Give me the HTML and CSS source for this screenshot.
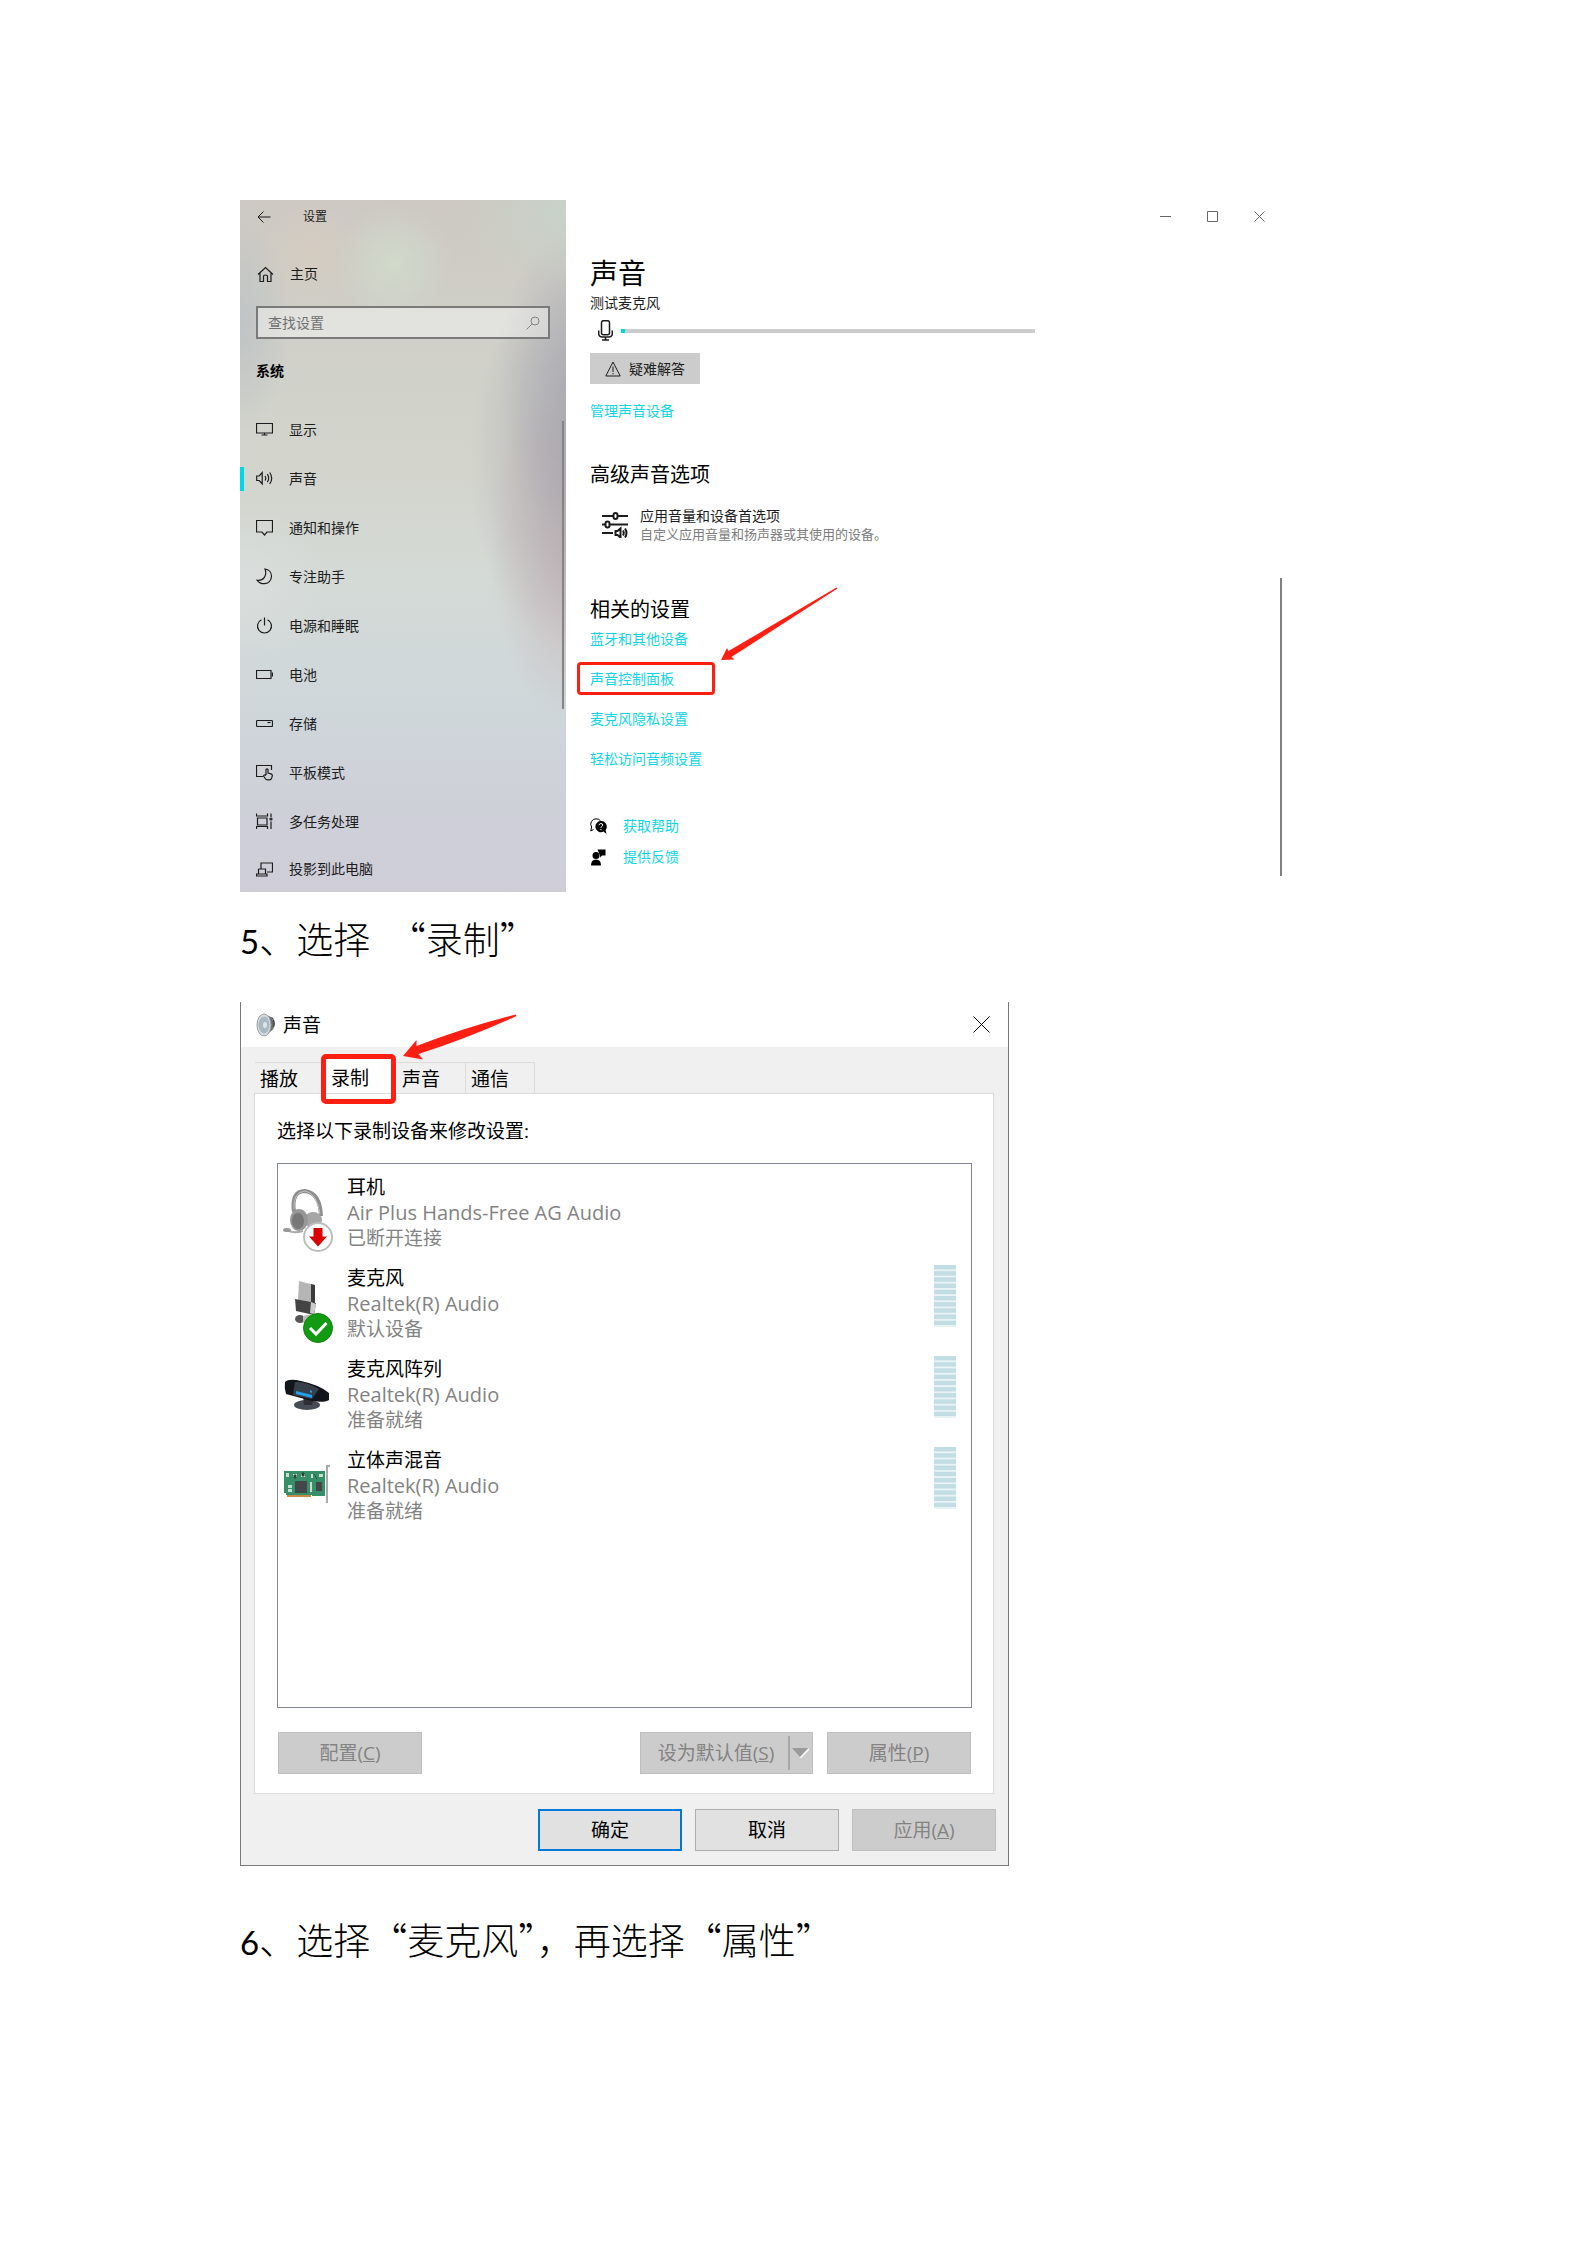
FILE: index.html
```
<!DOCTYPE html>
<html lang="zh-CN">
<head>
    <meta charset="UTF-8">
    <meta name="viewport" content="width=device-width, initial-scale=1.0">
    <title>麦克风设置说明</title>
    <link rel="stylesheet" href="styles.css">
</head>
<body>
    <div class="page">
        <section class="settings">
            <aside class="sidebar">
                <div class="sidebar-title">
                    <button class="icon-btn" aria-label="返回">
                        <svg width="14" height="12" viewBox="0 0 14 12"><path d="M13.500 6H1M6.500 .5L1 6l5.500 5.500"/></svg>
                    </button>
                    <span>设置</span>
                </div>
                <a class="home" href="#">
                    <svg width="17" height="17" viewBox="0 0 17 17"><path d="M1 8.500L8.500 1.500 16 8.500M3 7v8.500h3.500V10q0-1 2-1t2 1v5.500H14V7"/></svg>
                    <span>主页</span>
                </a>
                <div class="search">
                    <input type="text" placeholder="查找设置" aria-label="查找设置">
                    <svg width="14" height="14" viewBox="0 0 14 14"><circle cx="9" cy="5" r="4"/><path d="M6 8L.5 13.500"/></svg>
                </div>
                <h2 class="group">系统</h2>
                <nav class="nav">
                    <a href="#">
                        <svg width="17" height="17" viewBox="0 0 17 17"><path d="M.5 2.500h16v9.500H.5zM8.500 12V14M5.500 14h6"/></svg>
                        <span>显示</span>
                    </a>
                    <a class="active" href="#">
                        <svg width="17" height="17" viewBox="0 0 17 17"><path d="M.7 6v4.500h2.500l3 3.500V2.500l-3 3.500zM9 6q1.500 2.200 0 4.500M11.300 4.200q2.800 4 0 8M13.700 2.500q4 5.700 0 11.500"/></svg>
                        <span>声音</span>
                    </a>
                    <a href="#">
                        <svg width="17" height="17" viewBox="0 0 17 17"><path d="M.5 1.500h16v11.500h-5.500l-2.500 3-2.500-3H.5z"/></svg>
                        <span>通知和操作</span>
                    </a>
                    <a href="#">
                        <svg width="17" height="17" viewBox="0 0 17 17"><path d="M9 1c4 .5 6.500 3.500 6.500 7.200 0 4.300-3.200 7.500-7.300 7.500-3 0-5.500-1.300-7-3.400 6.300.9 10.200-5 7.800-11.300z"/></svg>
                        <span>专注助手</span>
                    </a>
                    <a href="#">
                        <svg width="17" height="17" viewBox="0 0 17 17"><path d="M8.500 .5v8M5.500 2.700a7 7 0 1 0 6 0"/></svg>
                        <span>电源和睡眠</span>
                    </a>
                    <a href="#">
                        <svg width="17" height="17" viewBox="0 0 17 17"><path d="M.5 4.500h14.500v8H.5zM16.500 6.500v4"/></svg>
                        <span>电池</span>
                    </a>
                    <a href="#">
                        <svg width="17" height="17" viewBox="0 0 17 17"><rect x=".5" y="5.500" width="16" height="6" rx="1"/><path d="M11.500 7.500h3"/></svg>
                        <span>存储</span>
                    </a>
                    <a href="#">
                        <svg width="17" height="17" viewBox="0 0 17 17"><path d="M7 12.500H.5v-11h15V6M10 11V5.500q1-1.200 2 0V9l3 .8q1.500.4 1.300 2l-.6 2.200q-.6 1.800-2.200 1.800h-2q-1.500 0-2.300-1.300L7.500 12q.5-1.800 2.500-.5"/></svg>
                        <span>平板模式</span>
                    </a>
                    <a href="#">
                        <svg width="17" height="17" viewBox="0 0 17 17"><path d="M.5 .5v2.500h11V.5M1.500 5h9.500v7H1.500zM.5 16v-2.500h11V16M15 .5V4M15 8.500V16"/><circle cx="15" cy="6" r="1"/></svg>
                        <span>多任务处理</span>
                    </a>
                    <a href="#">
                        <svg width="17" height="17" viewBox="0 0 17 17"><path d="M5 8V2h11.500v9H11M2.500 8H9.500v5M2.500 8v5M.5 13h10.500v2H.5z"/></svg>
                        <span>投影到此电脑</span>
                    </a>
                </nav>
                <div class="sidebar-scroll"></div>
            </aside>
            <main class="content">
                <div class="window-controls">
                    <button class="icon-btn" aria-label="最小化"><svg width="11" height="11" viewBox="0 0 11 11"><path d="M0 5.500h11"/></svg></button>
                    <button class="icon-btn" aria-label="最大化"><svg width="11" height="11" viewBox="0 0 11 11"><path d="M.5 .5h10v10H.5z"/></svg></button>
                    <button class="icon-btn" aria-label="关闭"><svg width="11" height="11" viewBox="0 0 11 11"><path d="M.5 .5l10 10M10.500 .5l-10 10"/></svg></button>
                </div>
                <h1>声音</h1>
                <p class="caption">测试麦克风</p>
                <div class="mic-test">
                    <svg width="15" height="21" viewBox="0 0 15 21"><rect x="3.500" y=".7" width="8" height="14" rx="2"/><path d="M.7 10.500v3q0 3.500 3.500 3.500h6.600q3.500 0 3.500-3.500v-3M7.500 17v3M4 20h7"/></svg>
                    <div class="level"></div>
                </div>
                <button class="troubleshoot">
                    <svg width="16" height="16" viewBox="0 0 16 16"><path d="M8 1L15.200 15H.8zM8 5.500v5.500M8 12v1.300"/></svg>
                    疑难解答
                </button>
                <a class="link manage" href="#">管理声音设备</a>

                <h2>高级声音选项</h2>
                <a class="option" href="#">
                    <svg width="26" height="26" viewBox="0 0 26 26"><path d="M0 4h11.500M15.500 4H26M0 12.500h3.500M7.500 12.500H26M0 21h11"/><rect x="11.500" y="1" width="4" height="6" rx="2"/><rect x="3.500" y="9.500" width="4" height="6" rx="2"/><path d="M13.500 19v4h2l3 2.500v-9l-3 2.500zM21 18.500q1.500 2.500 0 5M23 16.500q3 4.500 0 9"/></svg>
                    <span class="option-text">
                        <span>应用音量和设备首选项</span>
                        <small>自定义应用音量和扬声器或其使用的设备。</small>
                    </span>
                </a>

                <h2 class="related-title">相关的设置</h2>
                <div class="related">
                    <a class="link" href="#">蓝牙和其他设备</a>
                    <a class="link marked" href="#">声音控制面板
                        <svg class="arrow" width="117" height="74" viewBox="0 0 117 74"><path d="M0 73L6 61l1.500 3L115.500 .5l1 1L10.500 70l3 2.500z"/></svg>
                    </a>
                    <a class="link" href="#">麦克风隐私设置</a>
                    <a class="link" href="#">轻松访问音频设置</a>
                </div>
                <div class="help">
                    <svg width="17" height="17" viewBox="0 0 17 17"><path class="line" d="M3.500 11.500L.8 13l.8-4A5.300 5.300 0 0 1 6 .8q3 0 4.500 2"/><path d="M10.800 3a5.600 5.600 0 1 0 2.700 10.600L16.500 16l-.9-4A5.600 5.600 0 0 0 10.800 3z"/><path class="mark" d="M9 7.200q.2-1.700 1.900-1.700 1.800 0 1.800 1.500 0 1-1 1.500-.8.500-.8 1.400M10.900 11v1.200"/></svg>
                    <a class="link" href="#">获取帮助</a>
                    <svg width="17" height="17" viewBox="0 0 17 17"><circle cx="6" cy="6.500" r="3.500"/><path d="M1 16.500q0-6 5-6t5 6zM7.500 .5H15.500V6.500H12l-2 2V6.500z"/></svg>
                    <a class="link" href="#">提供反馈</a>
                </div>
                <div class="content-scroll"></div>
            </main>
        </section>

        <p class="step"><span class="num">5</span>、选择&ensp;“录制”</p>

        <section class="dialog">
            <header class="dialog-title">
                <svg width="20" height="24" viewBox="0 0 20 24">
                    <path d="M8 1l9 4q4 6 0 11l-8 7z" fill="#4b4d4f"/>
                    <path d="M11 3l6 4M12 20l5-4M16 7v9" stroke="#8b8d8f" fill="none"/>
                    <ellipse cx="8" cy="12" rx="7" ry="11" fill="#d9dcde" stroke="#9a9c9e"/>
                    <ellipse cx="8" cy="12" rx="5.500" ry="8.500" fill="#a9b9c3"/>
                    <ellipse cx="9" cy="12" rx="2" ry="3" fill="#dce5ea"/>
                </svg>
                <span>声音</span>
                <button class="icon-btn close" aria-label="关闭"><svg width="17" height="17" viewBox="0 0 17 17"><path d="M.5 .5l16 16M16.500 .5l-16 16"/></svg></button>
            </header>
            <div class="tabs" role="tablist">
                <button role="tab">播放</button>
                <button role="tab" class="selected" aria-selected="true">录制</button>
                <button role="tab">声音</button>
                <button role="tab">通信</button>
                <svg class="arrow" width="114" height="46" viewBox="0 0 114 46"><path d="M0 42L13.500 26v6Q60 14 112.500 .5l1 1.500Q65 24 15.500 40l4.500 5.500z"/></svg>
            </div>
            <div class="panel">
                <p>选择以下录制设备来修改设置:</p>
                <ul class="devices">
                    <li>
                        <svg class="device-icon" width="50" height="78" viewBox="0 0 50 78">
                            <path d="M11 38Q8 17 22 17Q37 19 38 42" fill="none" stroke="#8d8d8d" stroke-width="4"/>
                            <path d="M11 35Q10 18 22 17Q34 19 37 40" fill="none" stroke="#c2c2c2" stroke-width="1"/>
                            <ellipse cx="30" cy="46" rx="9" ry="8" fill="#a6a6a6"/>
                            <ellipse cx="16" cy="46" rx="9" ry="11" fill="#979797"/>
                            <ellipse cx="15" cy="47" rx="6" ry="8" fill="#777"/>
                            <path d="M3 56Q10 60 20 57" fill="none" stroke="#aaa" stroke-width="2"/>
                            <ellipse cx="4" cy="56" rx="4" ry="2" fill="#999"/>
                            <circle cx="35" cy="63" r="14" fill="#fff" stroke="#bdbdbd" stroke-width="2"/>
                            <path d="M30.500 54h9v8.500H44L35 72.500 26 62.500h4.500z" fill="#d90505"/>
                        </svg>
                        <div class="device-text">
                            <span class="name">耳机</span>
                            <span class="model">Air Plus Hands-Free AG Audio</span>
                            <span>已断开连接</span>
                        </div>
                    </li>
                    <li>
                        <svg class="device-icon" width="50" height="78" viewBox="0 0 50 78">
                            <path d="M16 16l15 4v20l-16-4z" fill="#b5b5b5"/>
                            <path d="M28 19l4 1v20l-4-1z" fill="#3c3c3c"/>
                            <path d="M12 34l16 3 5 1-2 12-18-4z" fill="#444"/>
                            <path d="M28 37l5 2-2 10-4-1z" fill="#ccc"/>
                            <ellipse cx="17" cy="54" rx="5" ry="4" fill="#555"/>
                            <path d="M20 51l9-2-2 7-7 2z" fill="#bbb"/>
                            <circle cx="35" cy="63" r="14.500" fill="#129a12" stroke="#0b860b"/>
                            <path d="M27 63l6 6L43.500 58" fill="none" stroke="#fff" stroke-width="3"/>
                        </svg>
                        <div class="device-text">
                            <span class="name">麦克风</span>
                            <span class="model">Realtek(R) Audio</span>
                            <span>默认设备</span>
                        </div>
                        <div class="meter"></div>
                    </li>
                    <li>
                        <svg class="device-icon" width="50" height="78" viewBox="0 0 50 78">
                            <ellipse cx="24" cy="49" rx="13" ry="5" fill="#454c54"/>
                            <path d="M20 39l11 2-2 8h-8z" fill="#2b3036"/>
                            <path d="M2 26Q6 22 18 25Q37 29 46 37V44Q42 47 29 45L3 38Q1 32 2 26z" fill="#12161b"/>
                            <path d="M12 26Q22 25 36 33L29 43 10 39z" fill="#37404a"/>
                            <path d="M13 35l16 4v3l-16-4zM27 34l2 1v2l-2-1z" fill="#22a0ee"/>
                        </svg>
                        <div class="device-text">
                            <span class="name">麦克风阵列</span>
                            <span class="model">Realtek(R) Audio</span>
                            <span>准备就绪</span>
                        </div>
                        <div class="meter"></div>
                    </li>
                    <li>
                        <svg class="device-icon" width="50" height="78" viewBox="0 0 50 78">
                            <path d="M47 19h-3v37" fill="none" stroke="#a9a9a9" stroke-width="2"/>
                            <path d="M1 24h41v25H29v-1H3v-2H1z" fill="#35906a"/>
                            <path d="M4 48h24v2H4z" fill="#c98a3d"/>
                            <path d="M12 34h12v12H12zM33 35h6v9h-6z" fill="#44474a"/>
                            <path d="M3 26h3v4H3zM10 27h4v3h-4zM18 27h4v3h-4zM5 38h4v3H5zM5 42h4v3H5zM27 35h2v10h-2zM28 27h2v4h-2zM36 27h4v3h-4z" fill="#c7ddd0"/>
                            <path d="M11 28h2v3h-2zM19 26h2v3h-2zM31 27l3 5" fill="#333" stroke="#2a4f3d"/>
                        </svg>
                        <div class="device-text">
                            <span class="name">立体声混音</span>
                            <span class="model">Realtek(R) Audio</span>
                            <span>准备就绪</span>
                        </div>
                        <div class="meter"></div>
                    </li>
                </ul>
                <div class="panel-buttons">
                    <button class="btn" disabled>配置(<u>C</u>)</button>
                    <button class="btn split" disabled>
                        <span>设为默认值(<u>S</u>)</span>
                        <svg width="17" height="10" viewBox="0 0 17 10"><path d="M8 10L17 1" stroke="#fff" stroke-width="1.500"/><path d="M0 0h16L8 9z" fill="#9b9b9b"/></svg>
                    </button>
                    <button class="btn" disabled>属性(<u>P</u>)</button>
                </div>
            </div>
            <footer class="dialog-buttons">
                <button class="btn default">确定</button>
                <button class="btn">取消</button>
                <button class="btn" disabled>应用(<u>A</u>)</button>
            </footer>
        </section>

        <p class="step"><span class="num">6</span>、选择“麦克风”，再选择“属性”</p>
    </div>
</body>
</html>
```

FILE: styles.css
```
*,
*::before,
*::after {
    margin: 0;
    padding: 0;
    box-sizing: border-box;
}

body {
    font-family: "Open Sans", "Noto Sans CJK SC", sans-serif;
    font-size: 14px;
    line-height: 20px;
    background: #fff;
    color: #1c1c1c;
}

a {
    color: inherit;
    text-decoration: none;
}

button,
input {
    font: inherit;
    color: inherit;
}

svg {
    display: block;
    flex: none;
    fill: none;
    stroke: currentColor;
}

.page {
    padding: 200px 240px;
}

.icon-btn {
    border: none;
    background: none;
    display: flex;
    align-items: center;
    justify-content: center;
}

/* Settings window */
.settings {
    display: flex;
    max-width: 1045px;
}

.sidebar {
    position: relative;
    flex: none;
    width: 326px;
    background:
        radial-gradient(ellipse 110px 70px at 100% 2%, rgba(200, 211, 201, 1), transparent),
        radial-gradient(ellipse 80px 160px at 104% 26%, rgba(163, 164, 174, 0.7), transparent),
        radial-gradient(ellipse 110px 190px at 104% 38%, rgba(168, 163, 171, 0.8), transparent),
        radial-gradient(ellipse 90px 180px at 104% 50%, rgba(196, 174, 178, 0.8), transparent),
        radial-gradient(circle 60px at 22% 8%, rgba(216, 205, 191, 0.6), transparent),
        radial-gradient(circle 60px at 47% 9%, rgba(208, 219, 203, 0.9), transparent),
        radial-gradient(ellipse 50px 110px at 0% 18%, rgba(186, 193, 196, 0.8), transparent),
        radial-gradient(ellipse 80px 80px at 2% 56%, rgba(218, 222, 221, 0.9), transparent),
        linear-gradient(#cdc8c2, #cfcfc8 18%, #d3d5cd 40%, #d4dad6 55%, #cfd7da 72%, #ced0d8 88%, #cfced8);
}

.sidebar-title {
    display: flex;
    align-items: center;
    gap: 32px;
    height: 33px;
    padding-left: 17px;
    font-size: 12px;
}

.home {
    display: flex;
    align-items: center;
    gap: 16px;
    margin: 29px 0 20px 17px;
    height: 24px;
}

.search {
    display: flex;
    align-items: center;
    height: 33px;
    margin: 0 16px;
    padding: 0 8px 0 10px;
    border: 2px solid #7a7a7b;
    background: rgba(255, 255, 255, 0.4);
    color: #858585;
}

.search input {
    flex: 1;
    min-width: 0;
    border: none;
    outline: none;
    background: none;
}

.search input::placeholder {
    color: #707070;
}

.sidebar .group {
    margin: 22px 16px 24px;
    font-size: 14px;
    font-weight: 700;
    line-height: 20px;
    color: #000;
}

.nav a {
    display: flex;
    align-items: center;
    gap: 16px;
    height: 49px;
    padding-left: 16px;
}

.nav a:last-child {
    height: 46px;
}

.nav svg,
.home svg {
    stroke-width: 1.2;
}

.nav .active {
    background: linear-gradient(#00d7e6, #00d7e6) no-repeat left center / 4px 24px;
}

.sidebar-scroll {
    position: absolute;
    top: 221px;
    right: 2px;
    width: 2px;
    height: 288px;
    background: #858585;
}

.content {
    position: relative;
    flex: 1;
    padding-left: 24px;
}

.window-controls {
    display: flex;
    justify-content: flex-end;
    gap: 36px;
    height: 33px;
    padding-right: 20px;
    color: #666;
}

.content h1 {
    margin-top: 22px;
    font-size: 28px;
    font-weight: 400;
    line-height: 36px;
    color: #000;
}

.caption {
    margin-top: 2px;
}

.mic-test {
    display: flex;
    align-items: center;
    gap: 8px;
    margin: 7px 0 12px 8px;
}

.mic-test svg {
    stroke-width: 1.5;
}

.level {
    width: 414px;
    height: 4px;
    background: linear-gradient(90deg, #00d7e6 4px, #ccc 4px);
}

.troubleshoot {
    display: flex;
    align-items: center;
    gap: 8px;
    height: 31px;
    padding: 0 15px;
    border: none;
    background: #ccc;
}

.link {
    display: block;
    width: fit-content;
    color: #10d5e4;
}

.manage {
    margin-top: 17px;
}

.content h2 {
    margin-top: 40px;
    font-size: 20px;
    font-weight: 400;
    line-height: 28px;
    color: #000;
}

.option {
    display: flex;
    align-items: center;
    gap: 12px;
    margin: 18px 0 0 12px;
    line-height: 18px;
}

.option svg {
    stroke-width: 2;
}

.option-text span,
.option-text small {
    display: block;
}

.option-text small {
    font-size: 13px;
    color: #7d7d7d;
}

.content .related-title {
    margin-top: 53px;
}

.related {
    display: grid;
    gap: 20px;
    margin-top: 5px;
}

.marked {
    position: relative;
}

.marked::after {
    content: '';
    position: absolute;
    top: -7px;
    left: -13px;
    width: 138px;
    height: 33px;
    border: 3px solid #ff1e12;
    border-radius: 4px;
}

.arrow {
    position: absolute;
    fill: #ff1e12;
    stroke: none;
}

.marked .arrow {
    left: 131px;
    bottom: 28px;
}

.help {
    display: grid;
    grid-template-columns: 17px auto;
    gap: 11px 16px;
    align-items: center;
    margin-top: 47px;
    color: #000;
}

.help svg {
    fill: currentColor;
    stroke: none;
}

.help .line {
    fill: none;
    stroke: currentColor;
}

.help .mark {
    fill: none;
    stroke: #fff;
}

.content-scroll {
    position: absolute;
    right: 3px;
    bottom: 16px;
    width: 2px;
    height: 298px;
    background: #808080;
}

/* Instruction lines */
.step {
    margin: 21px 0 36px;
    font-family: "Noto Sans CJK SC", sans-serif;
    font-size: 37px;
    font-weight: 300;
    line-height: 50px;
    color: #000;
}

.num {
    font-family: Lato, sans-serif;
    font-size: 33px;
    font-weight: 400;
}

/* Sound dialog */
.dialog {
    max-width: 769px;
    margin-bottom: 48px;
    border: 1px solid #7a7a7a;
    border-top: none;
    background: #f0f0f0;
    color: #000;
    font-size: 19px;
    line-height: 26px;
}

.dialog-title {
    display: flex;
    align-items: center;
    gap: 7px;
    height: 45px;
    padding: 0 18px 0 15px;
    background: #fff;
}

.dialog-title > svg {
    stroke: none;
}

.close {
    margin-left: auto;
}

.tabs {
    position: relative;
    display: flex;
    align-items: flex-end;
    padding: 10px 14px 0;
}

.tabs button {
    width: 69px;
    height: 36px;
    padding-left: 5px;
    padding-top: 7px;
    text-align: left;
    border: none;
    background: linear-gradient(#dcdcdc, #dcdcdc) no-repeat 0 5px / 100% 1px, linear-gradient(#dcdcdc, #dcdcdc) no-repeat 100% 5px / 1px 100%;
}

.tabs .selected {
    position: relative;
    width: 73px;
    padding: 6px 0 0 7px;
    background: #fff;
}

.tabs .selected::after {
    content: '';
    position: absolute;
    top: -3px;
    left: -3px;
    width: 75px;
    height: 50px;
    border: 5px solid #ff1e12;
    border-radius: 5px;
}

.tabs .arrow {
    left: 162px;
    bottom: 33px;
}

.panel {
    margin: 0 14px 0 13px;
    padding: 24px 21px 19px 22px;
    border: 1px solid #dcdcdc;
    background: #fff;
}

.devices {
    display: grid;
    align-content: start;
    gap: 13px;
    min-height: 545px;
    margin: 19px 0 24px;
    padding: 10px 15px 10px 5px;
    list-style: none;
    border: 1px solid #828790;
}

.devices li {
    display: flex;
}

.device-icon {
    stroke: none;
    margin-right: 14px;
}

.device-text {
    flex: 1;
    color: #838383;
}

.device-text span {
    display: block;
}

.device-text .name {
    color: #000;
}

.device-text .model {
    font-size: 20px;
    line-height: 25px;
}

.meter {
    width: 22px;
    height: 62px;
    background: linear-gradient(#c2dde3 75%, #eaf4f6 75%) 0 0 / 100% 10%;
}

.panel-buttons,
.dialog-buttons {
    display: flex;
    justify-content: flex-end;
    gap: 14px;
}

.panel-buttons {
    padding: 0 1px;
}

.panel-buttons .btn:first-child {
    margin-right: auto;
}

.dialog-buttons {
    gap: 13px;
    padding: 15px 12px 14px;
}

.btn {
    width: 144px;
    height: 42px;
    border: 1px solid #adadad;
    background: #e1e1e1;
}

.btn:disabled {
    border-color: #bfbfbf;
    background: #ccc;
    color: #838383;
}

.btn.default {
    border: 2px solid #0078d7;
}

.split {
    display: flex;
    align-items: center;
    width: 173px;
    padding: 3px;
}

.split span {
    flex: 1;
    height: 100%;
    line-height: 34px;
    margin-right: 2px;
    border-right: 2px solid #a8a8a8;
}

.split svg {
    stroke: none;
}
```
